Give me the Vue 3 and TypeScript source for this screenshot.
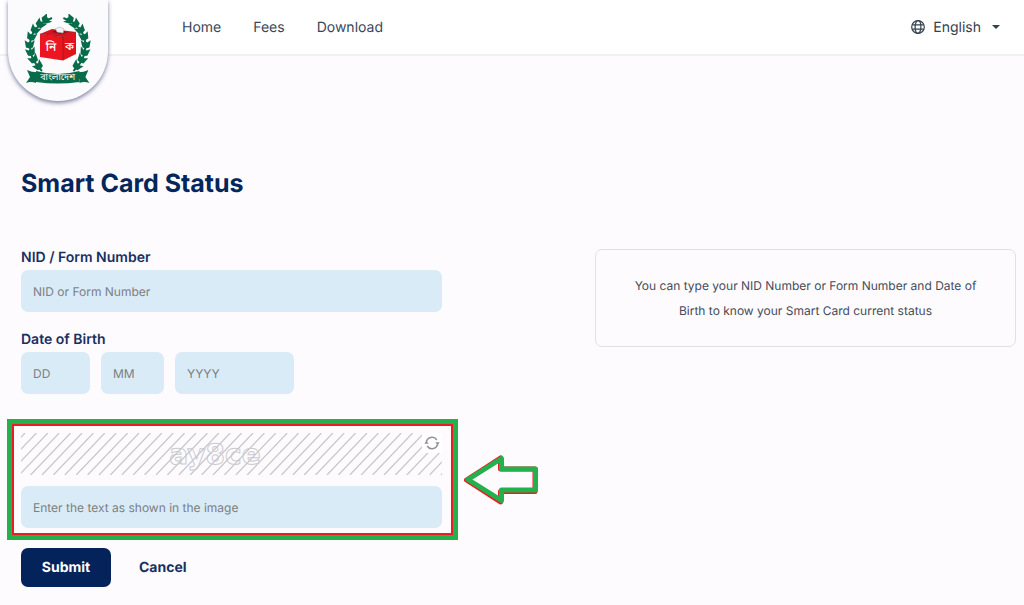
<script setup lang="ts">
import { ref } from 'vue'

interface NavItem {
  label: string
  href: string
}

interface Leaf {
  x: number
  y: number
  r: number
}

const nav: NavItem[] = [
  { label: 'Home', href: '#home' },
  { label: 'Fees', href: '#fees' },
  { label: 'Download', href: '#download' },
]

const nid = ref('')
const day = ref('')
const month = ref('')
const year = ref('')
const captcha = ref('')

const leaves: Leaf[] = [
  { x: 45, y: 20, r: -28 },
  { x: 39.5, y: 24.5, r: -45 },
  { x: 34.5, y: 30.5, r: -58 },
  { x: 31, y: 37.5, r: -72 },
  { x: 29.5, y: 45.5, r: -88 },
  { x: 31, y: 53, r: -104 },
  { x: 34, y: 60, r: -120 },
  { x: 39, y: 66.5, r: -132 },
]

const stripes = Array.from({ length: 41 }, (_, i) => Math.round(i * 114 - 360) / 10)
</script>

<template>
  <div class="page">
    <header class="bar">
      <a class="brand" href="#home" aria-label="Bangladesh Election Commission">
        <svg class="emblem" viewBox="24 14 68 72" aria-hidden="true">
          <g fill="#086c4a">
            <g v-for="side in [1, -1]" :key="side" :transform="side === 1 ? '' : 'translate(115.4 0) scale(-1 1)'">
              <path d="M52 18 Q30 27 30 46 Q30 60 42 71" fill="none" stroke="#086c4a" stroke-width="2" />
              <g v-for="(leaf, i) in leaves" :key="i" :transform="`translate(${leaf.x} ${leaf.y}) rotate(${leaf.r})`">
                <path d="M-3 0 L-2 -3.500 L5 -5 L3 -1.500 L4 0 L3 1.500 L5.500 5 L-2 3.500Z" />
              </g>
              <path d="M27 70 Q33 73 41 72 L41 80 L36 79 L36 83 Q31 81 26 83 L30 77Z" />
            </g>
            <path d="M36 71 Q57.700 77 79.400 71 V82 Q57.700 85 36 82Z" />
          </g>
          <path d="M40 34 L52 29 L76 32 L63 37Z" fill="#d3151e" />
          <path d="M40 34 L63 37 V60.500 L40 57Z" fill="#ec1620" />
          <path d="M63 37 L76 32 V54 L63 60.500Z" fill="#e1131d" />
          <path d="M40 34 L63 37 L76 32 M63 37 V60" fill="none" stroke="#841018" stroke-width=".5" />
          <path d="M52 32 L62 34 L67 32 L57 30Z" fill="#77151a" />
          <path d="M55.500 28.500 L60 27 L64 29 L63 33 L57 32Z" fill="#f1f3f3" stroke="#a9aeb0" stroke-width=".6" />
          <g fill="#fff" text-anchor="middle">
            <text x="51" y="51" font-size="12" font-weight="500">নি</text>
            <text x="69.500" y="50" font-size="11" font-weight="500">ক</text>
            <text x="57.700" y="80" font-size="9" font-weight="400">বাংলাদেশ</text>
          </g>
        </svg>
      </a>
      <nav class="nav" aria-label="Main">
        <a v-for="item in nav" :key="item.label" :href="item.href">{{ item.label }}</a>
      </nav>
      <button class="language" type="button" aria-haspopup="listbox">
        <svg width="14" height="14" viewBox="0 0 14 14" fill="none" stroke="currentColor" stroke-width="1.200" aria-hidden="true">
          <circle cx="7" cy="7" r="6.300" />
          <ellipse cx="7" cy="7" rx="2.900" ry="6.300" />
          <path d="M1.400 4.800H12.600M1.400 9.200H12.600" />
        </svg>
        <span>English</span>
        <svg class="caret" width="8" height="4" viewBox="0 0 8 4" aria-hidden="true"><path d="M0 0H8L4 4Z" fill="currentColor" /></svg>
      </button>
    </header>

    <main class="main">
      <h1>Smart Card Status</h1>
      <div class="columns">
        <form class="form" @submit.prevent>
          <div class="field">
            <label for="nid">NID / Form Number</label>
            <input id="nid" v-model="nid" type="text" placeholder="NID or Form Number" />
          </div>
          <fieldset class="field">
            <legend>Date of Birth</legend>
            <div class="date">
              <input v-model="day" class="day" type="text" placeholder="DD" aria-label="Day" />
              <input v-model="month" class="month" type="text" placeholder="MM" aria-label="Month" />
              <input v-model="year" class="year" type="text" placeholder="YYYY" aria-label="Year" />
            </div>
          </fieldset>
          <div class="highlight">
            <div class="captcha">
              <svg class="captcha-art" viewBox="0 0 421 42" preserveAspectRatio="none" role="img" aria-label="Captcha">
                <g stroke="#c6c6ca" stroke-width="1.200">
                  <line v-for="x in stripes" :key="x" :x1="x" y1="42" :x2="x + 40" y2="0" />
                </g>
              </svg>
              <svg class="captcha-code" width="100" height="42" viewBox="0 0 100 42">
                <text class="captcha-text" x="50" y="31" text-anchor="middle">ay8ce</text>
              </svg>
              <button class="refresh" type="button" aria-label="New captcha">
                <svg width="16" height="16" viewBox="0 0 16 16" fill="none" stroke="#929295" stroke-width="1.500" aria-hidden="true">
                  <path d="M2.300 7.500A5.700 5.700 0 0 1 12.800 5M13.700 8.500A5.700 5.700 0 0 1 3.200 11" />
                  <path d="M.3 8.800L2.300 6L4.800 8.800ZM11.200 7.200L13.700 10L15.700 7.200Z" fill="#929295" stroke="none" />
                </svg>
              </button>
            </div>
            <input v-model="captcha" type="text" placeholder="Enter the text as shown in the image" aria-label="Captcha text" />
            <svg class="arrow" width="76" height="52" viewBox="0 0 76 52" fill="none" stroke-linejoin="round" aria-hidden="true">
              <path d="M3.500 25L37.500 3V14H72V36.500H37.500V47Z" stroke="#ed1c24" stroke-width="5" />
              <path d="M5 24.500L38.500 3.500V14H72.500V35H38.500V45.500Z" stroke="#22b14c" stroke-width="5" />
            </svg>
          </div>
          <div class="actions">
            <button class="submit" type="submit">Submit</button>
            <button class="cancel" type="button">Cancel</button>
          </div>
        </form>
        <aside class="note">
          <p>You can type your NID Number or Form Number and Date of Birth to know your Smart Card current status</p>
        </aside>
      </div>
    </main>
  </div>
</template>

<style>
body {
  margin: 0;
  background: #fefbff;
}
</style>

<style scoped>
.page {
  font-family: Inter, "Noto Sans", sans-serif;
  font-size: 12px;
  color: #454b58;
  text-rendering: geometricPrecision;
}
.page *,
.page *::before {
  box-sizing: border-box;
}
button,
input {
  font: inherit;
  text-rendering: inherit;
}
button {
  padding: 0;
  border: 0;
  background: none;
  color: inherit;
  cursor: pointer;
}
.bar {
  display: flex;
  align-items: flex-start;
  height: 56px;
  padding: 0 24px 0 8px;
  border-bottom: 2px solid #f2f0f5;
  background: #fff;
  font-size: 14px;
}
.brand {
  display: flex;
  justify-content: center;
  flex: none;
  width: 100px;
  height: 101px;
  padding-top: 14px;
  border-radius: 0 0 50px 50px;
  background: #fbfbfd;
  box-shadow: 0 2px 4px #5c6688cc;
}
.emblem {
  width: 68px;
  height: 72px;
  font-family: "Noto Sans Bengali", "Noto Sans", sans-serif;
}
.nav {
  display: flex;
  gap: 32px;
  margin-left: 74px;
}
.nav a {
  color: #3a4657;
  line-height: 55px;
  text-decoration: none;
}
.language {
  display: flex;
  align-items: center;
  gap: 8px;
  height: 54px;
  margin-left: auto;
  color: #35414f;
}
.caret {
  margin-left: 3px;
}
.main {
  padding: 108px 8px 18px 21px;
}
h1 {
  margin: 0 0 45px;
  color: #03265b;
  font-size: 25px;
  font-weight: 700;
  line-height: 40px;
}
.columns {
  display: grid;
  grid-template-columns: 1fr 1fr;
  align-items: start;
  gap: 153px;
}
.field {
  min-width: 0;
  margin: 0 0 19px;
  padding: 0;
  border: 0;
}
label,
legend {
  display: block;
  padding: 0;
  color: #18305f;
  font-size: 14px;
  font-weight: 600;
  line-height: 18px;
}
input {
  display: block;
  width: 100%;
  height: 42px;
  padding: 1px 12px 0;
  border: 0;
  border-radius: 7px;
  background: #d9ebf7;
  color: #33414f;
}
label + input,
.date {
  margin-top: 3px;
}
input::placeholder {
  color: #7c7f81;
  opacity: 1;
}
.date {
  display: flex;
  gap: 11px;
}
.day {
  width: 69px;
}
.month {
  width: 63px;
}
.year {
  width: 119px;
}
.highlight {
  position: relative;
  display: grid;
  gap: 11px;
  margin: 39px 0 20px;
}
.highlight::before {
  content: "";
  position: absolute;
  inset: -14px -16px -12px -14px;
  border: 5px solid #22b14c;
  box-shadow: inset 0 0 0 2px #ed1c24;
  pointer-events: none;
}
.captcha {
  position: relative;
  height: 42px;
}
.captcha-art {
  display: block;
  width: 100%;
  height: 42px;
}
.captcha-code {
  position: absolute;
  top: 0;
  left: calc(50% - 67px);
}
.captcha-text {
  fill: none;
  stroke: #cbcbcf;
  font-family: "DejaVu Sans", sans-serif;
  font-size: 28px;
  font-weight: 700;
}
.refresh {
  position: absolute;
  top: 0;
  right: 0;
  display: grid;
  place-items: center;
  width: 20px;
  height: 20px;
  background: #fff;
}
.arrow {
  position: absolute;
  top: 22px;
  left: calc(100% + 21px);
}
.actions {
  display: flex;
  align-items: center;
  gap: 28px;
  font-size: 14px;
  font-weight: 700;
}
.submit {
  width: 90px;
  height: 39px;
  border-radius: 7px;
  background: #03235a;
  color: #fff;
}
.cancel {
  color: #18305f;
}
.note {
  padding: 23px 32px;
  border: 1px solid #e1e0e5;
  border-radius: 7px;
  text-align: center;
}
.note p {
  margin: 0;
  line-height: 25px;
}
</style>
